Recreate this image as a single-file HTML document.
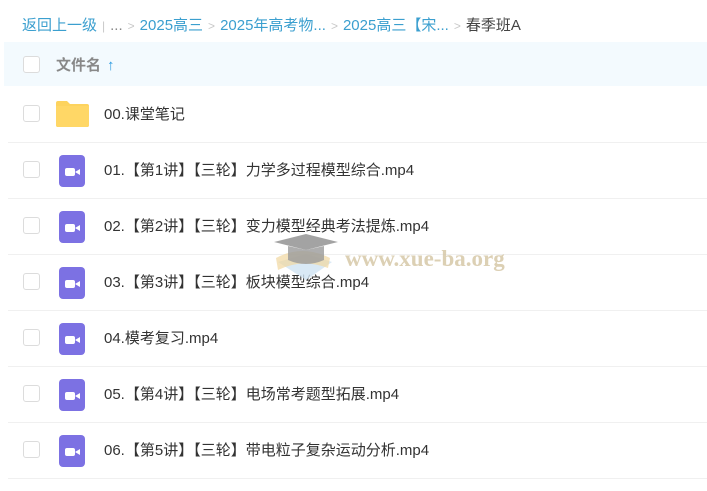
<!DOCTYPE html><html><head><meta charset="utf-8"><style>
body{margin:0;width:707px;height:491px;overflow:hidden;background:#fff;font-family:"Liberation Sans","Noto Sans CJK SC",sans-serif;position:relative}
.bc{position:absolute;left:22px;top:14px;font-size:15px;color:#3b9fcf;white-space:nowrap}
.bc .g{color:#c8c8c8;margin:0 5px;font-size:12px}
.bc .k{color:#444}
.hd{position:absolute;left:4px;top:42px;width:703px;height:44px;background:#f3fafe}
.cb{position:absolute;left:23px;width:15px;height:15px;border:1px solid #dcdcdc;border-radius:3px;background:#fff}
.hd .t{position:absolute;left:52px;top:12px;font-size:15px;color:#888;font-weight:bold}
.hd .t b{color:#2d9be0;margin-left:6px}
.row{position:absolute;left:8px;width:699px;height:56px;border-bottom:1px solid #f0f0f0}
.row .cb{left:15px;top:19px}
.row .n{position:absolute;left:96px;top:17px;font-size:15px;color:#333}
.fo{position:absolute;left:48px;top:14px;width:33px;height:27px}
.vi{position:absolute;left:51px;top:13px;width:26px;height:32px;background:#7c71e3;border-radius:4px}
.vi i{position:absolute;left:6px;top:13px;width:10px;height:8px;background:#fff;border-radius:2px}
.vi i:after{content:"";position:absolute;left:10px;top:1px;border-right:5px solid #fff;border-top:3px solid transparent;border-bottom:3px solid transparent}
.wm{position:absolute;left:345px;top:246px;font-family:"Liberation Serif",serif;font-weight:bold;font-size:23px;color:#d6c8a8;opacity:.85}
</style></head><body>
<div class="bc">返回上一级<span class="g">|</span><span style="color:#888">...</span><span class="g">&gt;</span>2025高三<span class="g">&gt;</span>2025年高考物...<span class="g">&gt;</span>2025高三【宋...<span class="g">&gt;</span><span class="k">春季班A</span></div>
<div class="hd"><div class="cb" style="left:19px;top:14px"></div><div class="t">文件名<b>↑</b></div></div>
<div class="row" style="top:86px"><div class="cb"></div>
<svg class="fo" viewBox="0 0 33 27"><path d="M0 3a2 2 0 0 1 2-2h9l3 3h17a2 2 0 0 1 2 2v19a2 2 0 0 1-2 2H2a2 2 0 0 1-2-2z" fill="#fdd35e"/><path d="M0 6h33v19a2 2 0 0 1-2 2H2a2 2 0 0 1-2-2z" fill="#ffd766"/></svg>
<div class="n">00.课堂笔记</div></div>
<div class="row" style="top:142px"><div class="cb"></div><div class="vi"><i></i></div><div class="n">01.【第1讲】【三轮】力学多过程模型综合.mp4</div></div>
<div class="row" style="top:198px"><div class="cb"></div><div class="vi"><i></i></div><div class="n">02.【第2讲】【三轮】变力模型经典考法提炼.mp4</div></div>
<div class="row" style="top:254px"><div class="cb"></div><div class="vi"><i></i></div><div class="n">03.【第3讲】【三轮】板块模型综合.mp4</div></div>
<div class="row" style="top:310px"><div class="cb"></div><div class="vi"><i></i></div><div class="n">04.模考复习.mp4</div></div>
<div class="row" style="top:366px"><div class="cb"></div><div class="vi"><i></i></div><div class="n">05.【第4讲】【三轮】电场常考题型拓展.mp4</div></div>
<div class="row" style="top:422px"><div class="cb"></div><div class="vi"><i></i></div><div class="n">06.【第5讲】【三轮】带电粒子复杂运动分析.mp4</div></div>
<svg style="position:absolute;left:272px;top:232px" width="70" height="56" viewBox="0 0 70 56"><path d="M6 30 L34 22 L60 30 L34 48 Z" fill="#cfe3f2" opacity=".8"/><path d="M4 26 Q30 12 58 26 L56 36 Q30 26 6 38Z" fill="#f1d7a0" opacity=".7"/><path d="M2 10 L34 2 L66 10 L34 18Z" fill="#8c8c8c" opacity=".8"/><path d="M16 14 L16 28 Q34 36 52 28 L52 14 L34 18Z" fill="#9a9a9a" opacity=".8"/></svg>
<div class="wm">www.xue-ba.org</div>
</body></html>
